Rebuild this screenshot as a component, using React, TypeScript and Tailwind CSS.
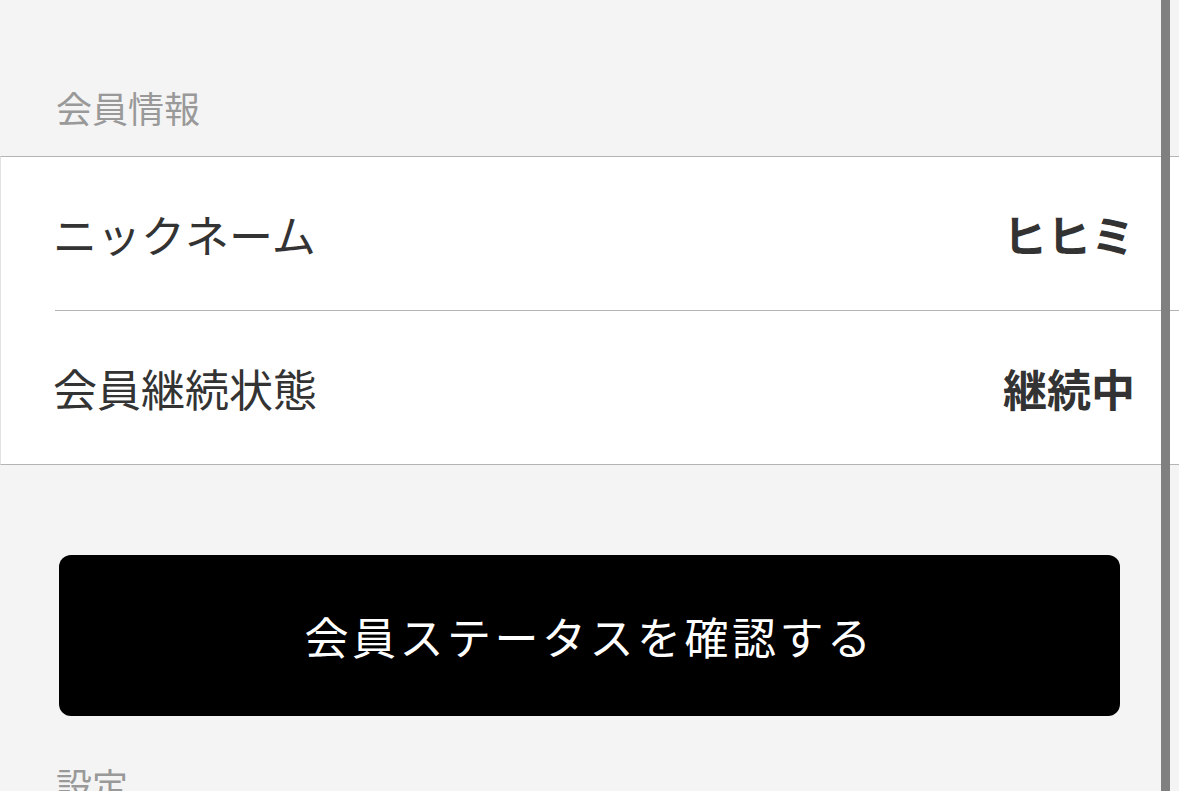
export default function App() {
  return (
    <div className="relative h-[791px] overflow-hidden bg-[#f4f4f4] font-['Noto_Sans_CJK_JP','Noto_Sans',sans-serif]">
      {/* Section title */}
      <div className="pl-[56px] pt-[89px] pb-[31px] text-[36px] leading-none text-[#999999]">
        会員情報
      </div>

      {/* Member info list */}
      <div className="bg-white border-t border-b border-[#b4b4b4] border-l border-l-[#e2e2e2]">
        <div className="pl-[54px]">
          <div className="flex h-[154px] items-center justify-between border-b border-[#b4b4b4] pr-[44px]">
            <span className="-ml-[2px] text-[44px] leading-none text-[#333333]">ニックネーム</span>
            <span className="text-[44px] leading-none font-bold text-[#333333]">ヒヒミ</span>
          </div>
        </div>
        <div className="flex h-[153px] items-center justify-between pl-[52px] pr-[44px]">
          <span className="text-[44px] leading-none text-[#333333]">会員継続状態</span>
          <span className="text-[44px] leading-none font-bold text-[#333333]">継続中</span>
        </div>
      </div>

      {/* Status button */}
      <button
        type="button"
        className="mx-[59px] mt-[90px] flex h-[161px] w-[1061px] items-center justify-center rounded-[12px] bg-black text-[44px] leading-none tracking-[3.5px] text-white"
      >
        会員ステータスを確認する
      </button>

      <div className="pl-[56px] pt-[50px] text-[36px] leading-none text-[#999999]">設定</div>

      {/* Scrollbar */}
      <div className="absolute top-0 bottom-0 left-[1161px] w-[9px] bg-[#808080]" />
    </div>
  );
}
